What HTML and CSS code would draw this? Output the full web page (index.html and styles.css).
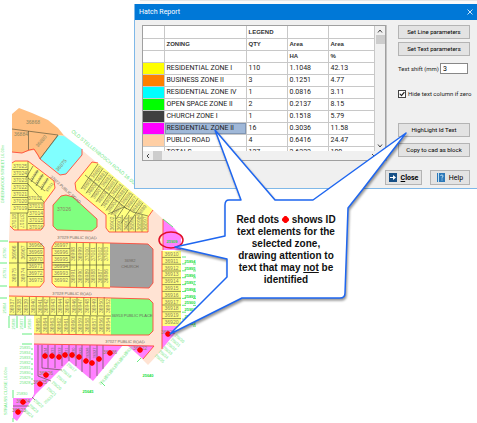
FILE: index.html
```html
<!DOCTYPE html>
<html lang="en">
<head>
<meta charset="utf-8">
<title>Hatch Report</title>
<link rel="stylesheet" href="styles.css">
</head>
<body>
<main class="scene">
  <svg class="drawing" viewBox="0 0 477 423" aria-label="Zoning plan">
    <path class="road" d="M12 150L64 135L153 210L163 219V349L148 365L128 345H34V333L9 297V240Z"/>
    <path fill="#fff" d="M8 315H34V344H8Z"/>

    <path class="business" d="M12 114L19 108L32 113L48 120L58 128L64 135.500H58L40 159L34 150L29 151L22 153L12 152Z"/>
    <path class="lot" d="M12 129L58 135L40 159M28.500 131V150"/>
    <path class="cyan" d="M58 135.500L64 136L82 149V155L66 174L61 175L40 159Z"/>
    <path class="lot" d="M58 135.500L40 159"/>
    <path class="kerb" d="M12 152L22 153L29 150L34 149L38 155L40 159L60 175L66 174L82 155V149"/>

    <g class="res">
      <path d="M12 163L15 161H28L54 181L55 188L44 203V226L41 230H14L10 226Z"/>
      <path d="M92 162L98 163L153 210L148 217V232H109L106 228V215L76 190L75 183Z"/>
      <path d="M9 242H39L44 247V282L40 287H9Z"/>
      <path d="M55 242L110 243V288L56 287L52 283V247Z"/>
      <path d="M9 296L111 298V335L34 334V315H9Z"/>
      <path d="M162 251H181V326H162Z"/>
    </g>
    <path class="lot" d="M28 161V213M28 178L45 191M28 184L44 202M10 213H28M18 213V230M27 213V230M28 203H44M9 263H44M27 242V287M18 242V287M70 242V287M52 265H110M9 315L111 316M85 175L127 209M108 214L124 207L133 212L148 216"/>
    <g id="lots" class="lot"></g>
    <path class="kerb" d="M12 163L15 161H28L54 181L55 188L44 203V226L41 230H14L10 226M98 163L92 162L75 183L76 190L106 215V228L109 232H148V217L153 210M9 242H39L44 247V282L40 287H9M110 243L55 242L52 247V283L56 287L110 288M9 296L111 298M111 335L34 334M162 251V326"/>

    <path class="park" d="M61 196L66 195L73 197L97 219V227L92 231L57 230L53 226V205Z"/>
    <path class="church" d="M110 243L148 244L153 249V283L149 288L110 287Z"/>
    <path class="park" d="M111 298L149 299L153 303V331L149 335H111Z"/>
    <path class="kerb" d="M110 243L148 244L153 249V283L149 288L110 287M61 196L66 195L73 197L97 219V227L92 231L57 230L53 226V205ZM111 298L149 299L153 303V331L149 335H111"/>

    <g class="magenta">
      <path d="M34 344L123 345L93 381L69 361L36 394L17 421L13 418V398H32L34 394Z"/>
      <path d="M127 345L154 346L143 359Z"/>
      <path d="M163 219L174 228L181 236V250H163Z"/>
      <path d="M162 326H181L162 349Z"/>
    </g>
    <path class="lot" d="M42 345V368L62 370M38 345V376L51 381M13 406H29M32 397L35 400M48 345V368M55 345V368M62 345V366M69 345V361M76 345V366M82 345V372M90 345V378M97 345V376M103 345V369"/>
    <path class="kerb" d="M34 344L154 346L143 359M162 349V326M163 219V250"/>
    <g id="ticks" class="ticks"></g>
    <g id="labels"></g>
    <g id="dots" class="dots"></g>
    <ellipse class="ring" cx="171" cy="240" rx="12" ry="8"/>
  </svg>

  <div class="backdrop"></div>
  <section class="dialog" aria-label="Hatch Report">
    <header class="titlebar">
      <h1>Hatch Report</h1>
      <button class="x" aria-label="Close window"><svg viewBox="0 0 6 6"><path d="M.5 .5L5.500 5.500M5.500 .5L.5 5.500"/></svg></button>
    </header>
    <div class="body">
      <div class="grid">
        <div class="view">
          <table>
            <colgroup><col class="c1"><col class="c2"><col class="c3"><col class="c3"><col class="c4"></colgroup>
            <thead>
              <tr><th></th><th></th><th>LEGEND</th><th></th><th></th></tr>
              <tr><th></th><th>ZONING</th><th>QTY</th><th>Area</th><th>Area</th></tr>
              <tr><th></th><th></th><th></th><th>HA</th><th>%</th></tr>
            </thead>
            <tbody>
              <tr><td class="yellow"></td><td>RESIDENTIAL ZONE I</td><td>110</td><td>1.1048</td><td>42.13</td></tr>
              <tr><td class="orange"></td><td>BUSINESS ZONE II</td><td>3</td><td>0.1251</td><td>4.77</td></tr>
              <tr><td class="aqua"></td><td>RESIDENTIAL ZONE IV</td><td>1</td><td>0.0816</td><td>3.11</td></tr>
              <tr><td class="green"></td><td>OPEN SPACE ZONE II</td><td>2</td><td>0.2137</td><td>8.15</td></tr>
              <tr><td class="dark"></td><td>CHURCH ZONE I</td><td>1</td><td>0.1518</td><td>5.79</td></tr>
              <tr><td class="pink"></td><td class="selected">RESIDENTIAL ZONE II</td><td>16</td><td>0.3036</td><td>11.58</td></tr>
              <tr><td class="peach"></td><td>PUBLIC ROAD</td><td>4</td><td>0.6416</td><td>24.47</td></tr>
              <tr><td></td><td>TOTALS</td><td>127</td><td>2.6222</td><td>100</td></tr>
            </tbody>
          </table>
        </div>
        <div class="vbar">
          <svg viewBox="0 0 6 4"><path d="M1 3.500L3 1L5 3.500"/></svg>
          <span class="vthumb"></span>
          <svg class="end" viewBox="0 0 6 4"><path d="M1 .5L3 3L5 .5"/></svg>
        </div>
        <div class="hbar">
          <svg viewBox="0 0 4 6"><path d="M3 1L1 3L3 5"/></svg>
          <span class="hthumb"></span>
          <svg class="end" viewBox="0 0 4 6"><path d="M1 1L3 3L1 5"/></svg>
        </div>
      </div>
      <div class="side">
        <button class="btn">Set Line parameters</button>
        <button class="btn">Set Text parameters</button>
        <div class="shift"><label for="shift">Text shift (mm)</label><input id="shift" type="text" value="3"></div>
        <label class="check" for="hide"><input id="hide" type="checkbox" checked><span>Hide text column if zero</span></label>
        <button class="btn">HighLight Id Text</button>
        <button class="btn copy">Copy to cad as block</button>
      </div>
      <div class="actions">
        <button class="btn close"><svg viewBox="0 0 8 9"><path fill="#174f86" d="M0 0H8V9H0Z"/><path fill="#fff" d="M1 4H4V2L7 4.500L4 7V5H1Z"/></svg><span><u>C</u>lose</span></button>
        <button class="btn help"><svg viewBox="0 0 8 9"><path fill="#2c78b8" d="M0 0H8V9H0Z"/><path stroke="#bfe0f5" fill="none" d="M1.500 0V9M3.500 3Q3.500 2 5 2Q6 2 6 3Q6 4 5 4.500V5.500M5 6.500V7.500"/></svg><span>Help</span></button>
      </div>
    </div>
  </section>

  <svg class="callout" viewBox="0 0 477 423" aria-hidden="true">
    <path class="bubble" d="M229 200H241L215 130L275 200H313L406 133L363 189L348 208L345 293Q345 298 340 298H242L170 334L227 277V259L175 247L225 236V205Q225 200 229 200Z"/>
  </svg>
  <p class="note">Red dots <svg viewBox="0 0 8 8" aria-hidden="true"><path fill="#f00" d="M3 0H5L8 3V5L5 8H3L0 5V3Z"/></svg> shows ID<br>text elements for the<br>selected zone,<br>drawing attention to<br>text that may <u>not</u> be<br>identified</p>
</main>
<script src="plan.js"></script>
</body>
</html>
```
FILE: styles.css
```css
* { box-sizing: border-box; }

body {
  margin: 0;
  background: #fff;
  font-family: Roboto, "Liberation Sans", sans-serif;
  font-size: 7px;
  line-height: 8px;
  color: #222;
}

.scene { position: relative; min-height: 423px; overflow: hidden; }

.drawing, .callout {
  position: absolute;
  top: 0;
  left: 0;
  width: 477px;
  height: 423px;
  pointer-events: none;
}

.road { fill: #ffe3d3; }
.business { fill: #ffbf80; }
.cyan { fill: #80ffff; }
.res { fill: #ffff80; }
.park { fill: #80ff80; }
.church { fill: #a0a0a0; }
.magenta { fill: #ff80ff; }
.lot { fill: none; stroke: #4a4a30; stroke-width: 0.6; }
.kerb { fill: none; stroke: #ff4a38; stroke-width: 0.9; }
.ticks { fill: none; stroke: #40e860; stroke-width: 0.8; }
.dots { fill: #f00; }
.ring { fill: none; stroke: #e01028; stroke-width: 1.5; }

.label { font: 5px "Liberation Sans", sans-serif; fill: #8c8660; text-anchor: middle; }
.label.small { font-size: 4px; fill: #6c665c; }
.label.street { fill: #6fe884; }
.label.erf { font-size: 4px; fill: #6fe884; }
.label.strong { font-size: 4px; font-weight: bold; fill: #20e040; }

.bubble {
  fill: #fff;
  stroke: #1e66f0;
  stroke-width: 1.5;
  stroke-linejoin: round;
  filter: drop-shadow(1px 2px 1px rgba(0, 0, 0, 0.4));
}

.note {
  position: absolute;
  top: 214px;
  left: 226px;
  width: 120px;
  margin: 0;
  font: bold 10px/12px "Liberation Sans", sans-serif;
  color: #111;
  text-align: center;
}
.note svg { width: 7px; height: 7px; }

.backdrop { height: 4px; margin-left: 140px; background: linear-gradient(#e6e6e6 1px, #fafafa 1px); }

.dialog {
  position: relative;
  margin-left: 134px;
  border: 1px solid #7fb8e8;
  border-width: 0 0 1px 1px;
  background: #f0f0f0;
}

.titlebar {
  display: flex;
  align-items: center;
  justify-content: space-between;
  height: 16px;
  padding: 0 4px;
  background: #0078d7;
  color: #fff;
}
h1 { margin: 0; font: 7px/8px Roboto, sans-serif; }
.x { width: 6px; height: 6px; padding: 0; border: 0; background: none; display: flex; }
.x svg { width: 6px; height: 6px; stroke: #fff; stroke-width: 0.8; }

.body {
  display: grid;
  grid-template-columns: 1fr 84px;
  padding: 5px 7px 3px;
}

.grid {
  display: grid;
  grid-template-columns: 1fr 10px;
  border: 1px solid #a0a0a0;
  background: #f0f0f0;
  align-self: start;
}
.view { height: 125px; overflow: hidden; background: #fff; }

table { width: 100%; table-layout: fixed; border-collapse: collapse; }
.c1 { width: 21px; }
.c2 { width: 82px; }
.c3 { width: 41px; }
th, td {
  height: 12px;
  padding: 0 0 0 2px;
  border: 1px solid #c8c8c8;
  border-width: 0 1px 1px 0;
  text-align: left;
  white-space: nowrap;
  line-height: 8px;
}
th { font: bold 6px/8px "Liberation Sans", sans-serif; color: #333; }
.yellow { background: #ff0; }
.orange { background: #ff8000; }
.aqua { background: #0ff; }
.green { background: #0f0; }
.dark { background: #404040; }
.pink { background: #f0f; }
.peach { background: #ffcfa5; }
.selected { background: #a0b8d8; box-shadow: inset 0 0 0 1px #8096b4; }

.vbar, .hbar { display: flex; align-items: center; }
.vbar { flex-direction: column; gap: 2px; padding: 3px 0; }
.hbar { grid-column: 1 / -1; gap: 3px; height: 9px; padding: 0 10px 0 3px; }
.vbar svg { width: 6px; height: 4px; }
.hbar svg { width: 4px; height: 6px; }
.vbar svg, .hbar svg { fill: none; stroke: #444; }
.vthumb, .hthumb { width: 9px; height: 9px; background: #cdcdcd; }
.vbar .end { margin-top: auto; }
.hbar .end { margin-left: auto; }

.side {
  display: flex;
  flex-direction: column;
  gap: 3px;
  padding: 0 0 0 11px;
  border-left: 1px solid #c4c4c4;
  font-size: 6px;
}

.btn {
  display: flex;
  align-items: center;
  justify-content: center;
  gap: 4px;
  width: 100%;
  height: 14px;
  padding: 0;
  border: 1px solid #b4b4b4;
  background: #e3e3e3;
  font: inherit;
  color: #000;
  white-space: nowrap;
}

.shift { display: flex; align-items: center; justify-content: space-between; margin: 4px 2px 0 0; white-space: nowrap; }
.shift input {
  flex: none;
  width: 28px;
  height: 11px;
  padding: 0 2px;
  border: 1px solid #888;
  background: #fff;
  font: inherit;
  font-size: 7px;
}
.check { display: flex; align-items: center; gap: 2px; margin: 13px 0 22px; white-space: nowrap; }
.check input {
  appearance: none;
  flex: none;
  width: 8px;
  height: 8px;
  margin: 0;
  border: 1px solid #444;
  background: #fff;
}
.check input:checked::before {
  content: "";
  display: block;
  width: 6px;
  height: 6px;
  background: #222;
  clip-path: polygon(5% 50%, 20% 40%, 40% 62%, 82% 12%, 98% 25%, 42% 90%);
}
.copy { margin-top: 3px; }

.actions {
  grid-column: 1 / -1;
  display: flex;
  justify-content: flex-end;
  gap: 8px;
  margin-top: 9px;
}
.actions .btn { height: 15px; font-size: 7px; }
.actions .close { width: 37px; font-weight: bold; }
.actions .help { width: 40px; }
.actions svg { width: 8px; height: 9px; }
```
FILE: plan.js
```js
const NS = "http://www.w3.org/2000/svg";
const byId = (id) => document.getElementById(id);

function path(parent, d) {
  const el = document.createElementNS(NS, "path");
  el.setAttribute("d", d);
  byId(parent).appendChild(el);
}

function label(text, x, y, turn = 0, kind = "") {
  const el = document.createElementNS(NS, "text");
  el.setAttribute("class", "label " + kind);
  el.setAttribute("transform", `translate(${x} ${y}) rotate(${turn})`);
  el.setAttribute("dy", "2");
  el.textContent = text;
  byId("labels").appendChild(el);
}

// Stacked lots with a number in each row: x, width, first centre, pitch, numbers.
function stack(x, w, y, pitch, numbers) {
  numbers.forEach((n, i) => {
    const cy = y + i * pitch;
    label(n, x + w / 2, cy);
    if (i < numbers.length - 1) path("lots", `M${x} ${cy + pitch / 2}h${w}`);
  });
}

// Side by side lots, numbers read upwards.
function row(x, y, h, pitch, numbers) {
  numbers.forEach((n, i) => {
    if (i) path("lots", `M${x + i * pitch} ${y}v${h}`);
    label(n, x + (i + 0.5) * pitch, y + h / 2, -90);
  });
}

stack(12, 16, 166, 7, [37025, 37024, 37023, 37022, 37021, 37020, 37019]);
stack(28, 16, 206, 7, [37013, 37014, 37015, 37016]);
label(37012, 35, 198);
label(37017, 22, 221, 90);
label(37018, 14, 221, -90);
stack(27, 17, 245, 7, [36968, 36969, 36970, 36971, 36972, 36973]);
row(9, 242, 21, 9, [36966, 36967]);
row(9, 264, 22, 9, [36975, 36974]);
stack(52, 18, 245, 7, [36997, 36996, 36995, 36994, 36993, 36992]);
row(70, 243, 22, 6.600, [36998, 36999, 37000, 37001, 37002, 37003]);
row(70, 265, 22, 6.600, [36991, 36990, 36989, 36988, 36987, 36986]);
row(9, 297, 18, 6.800, [36937, 36938, 36939, 36940, 36941, 36942, 36943, 36944, 36945, 36946, 36947, 36948, 36949, 36950, 36952]);
row(34, 316, 18, 7, [36965, 36964, 36963, 36962, 36961, 36960, 36959, 36958, 36957, 36956, 36954]);
stack(162, 19, 254, 6.800, [36910, 36911, 36912, 36913, 36914, 36915, 36916, 36917, 36918, 36919, 36920]);
row(109, 215, 17, 6.600, [36902, 36901, 36900, 36899, 36898, 36897]);

for (let i = 0; i < 10; i++) {
  const x = 98 + i * 5, y = 164 + i * 4.300;
  path("lots", `M${x} ${y}L${x - 17} ${y + 25}`);
  label(36880 + i, x - 2, y + 8, -52);
  if (i < 7) label(36909 - i, x - 11, y + 20, -52);
}
for (let i = 0; i < 4; i++) {
  path("lots", `M${33 + i * 5} ${166 + i * 4}l-7 12`);
  label(37008 + i, 34 + i * 5, 175 + i * 4, -55, "small");
}
for (let i = 0; i < 8; i++) label(36934 - i, 45 + i * 7, 353, -90, "small");

label("36868", 33, 122);
label("36884", 21, 134);
label("36880", 41, 141, -50);
label("36875", 61, 165, -50);
label("37026", 64, 209);
label("36982", 130, 260, 0, "small");
label("CHURCH", 130, 266, 0, "small");
label("36953 PUBLIC PLACE", 132, 315, 0, "small");
label("37023 PUBLIC ROAD", 66, 189, 42, "small");
label("37029 PUBLIC ROAD", 77, 237, 1, "small");
label("37028 PUBLIC ROAD", 72, 293, 1, "small");
label("37027 PUBLIC ROAD", 125, 341, 1, "small");
label("36936", 110, 352);
label("36922", 140, 348);
label("36926", 46, 373);
label("36925", 40, 382);
label("36924", 23, 401);
label("36923", 19, 410);
label("36921", 168, 332);

label("OLD STELLENBOSCH ROAD 16.00m", 105, 158, 40, "street");
label("GREENWOOD STREET 16.00m", 2, 174, -90, "erf");
label("STRAUSS CLOSE 16.00m", 5, 391, -90, "erf");
label("25790", 4, 253, -90, "erf");
label("25791", 4, 273, -90, "erf");
label("25804", 4, 308, -90, "erf");
[25838, 25837, 25836].forEach((n, i) => label(n, 13 + i * 8, 324, -90, "erf"));
label("25830", 22, 393, 0, "erf");
for (let i = 0; i < 8; i++) {
  label(25835 - i, 25, 347 + i * 5, 0, "erf");
  path("ticks", `M31 ${349 + i * 5}h2`);
}
for (let i = 0; i < 10; i++) {
  label(25894 + i, 190, 261 + i * 6.900, 0, "strong");
  path("ticks", `M182 ${257 + i * 6.900}h4M193 ${264 + i * 6.900}h3`);
}
label("25909", 172, 241, 0, "strong");
label("25640", 148, 375, 0, "strong");
label("25645", 88, 391, 0, "strong");
for (let i = 0; i < 5; i++) label(25617 + i, 72 - i * 5, 367 + i * 6, 40, "erf");
for (let i = 0; i < 3; i++) label(25822 + i, 39 - i * 5, 403 + i * 5, 40, "erf");
for (let i = 0; i < 6; i++) label(25615 + i, 103 + i * 5, 380 - i * 6, -45, "erf");
for (let i = 0; i < 6; i++) label(25630 + i, 180 - i * 4, 338 + i * 4, 40, "erf");
label("25623", 48, 399, -45, "erf");
path("ticks", "M0 241h8M0 263h7M0 286h7M0 298h7M9 316v12M17 316v12M25 316v12M22 334h10M22 344h10M13 390v8M13 418v4M101 382l4 4M137 362l4-4M163 219l10 8");

[[45, 356], [52, 356], [59, 357], [65, 355], [72, 355], [79, 357], [86, 361], [92, 363],
 [99, 359], [110, 353], [140, 350], [46, 375], [40, 384], [23, 402], [18, 412], [168, 334]]
  .forEach(([x, y]) => path("dots", `M${x} ${y - 3}l2 1l1 2l-1 2l-2 1l-2-1l-1-2l1-2z`));
```
